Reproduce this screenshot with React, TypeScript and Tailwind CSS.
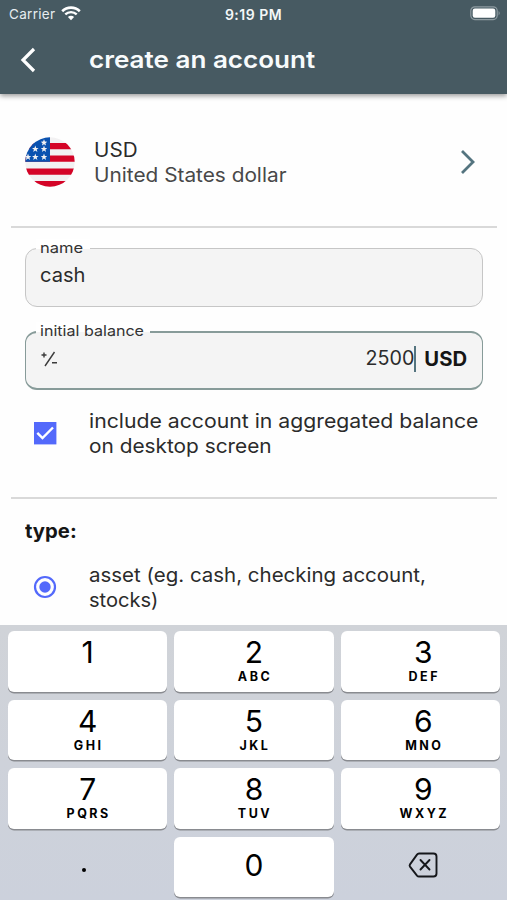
import type { ReactNode } from "react";

const KEYS: { digit: string; letters: string }[] = [
  { digit: "1", letters: "" },
  { digit: "2", letters: "ABC" },
  { digit: "3", letters: "DEF" },
  { digit: "4", letters: "GHI" },
  { digit: "5", letters: "JKL" },
  { digit: "6", letters: "MNO" },
  { digit: "7", letters: "PQRS" },
  { digit: "8", letters: "TUV" },
  { digit: "9", letters: "WXYZ" },
];

function StatusBar() {
  return (
    <div className="flex h-7 items-center text-[13.5px] text-[#e6edf0]">
      <div className="flex flex-1 items-center gap-[6px] pl-[9px]">
        <span className="tracking-[0.3px]">Carrier</span>
        <svg width="20" height="15" viewBox="0 0 20 15" className="mb-[2px] shrink-0">
          <path d="M1.2 5.2a12.6 12.6 0 0 1 17.6 0" fill="none" stroke="#fff" strokeWidth="2.6" />
          <path d="M4.3 8.4a8.2 8.2 0 0 1 11.4 0" fill="none" stroke="#fff" strokeWidth="2.4" />
          <path d="M10 14.2 6.9 11a4.4 4.4 0 0 1 6.2 0z" fill="#fff" />
        </svg>
      </div>
      <span className="-ml-[3px] text-[14px] font-semibold tracking-[0.5px] text-[#f4f7f8]">9:19 PM</span>
      <div className="flex flex-1 justify-end pr-[6px] pb-px">
        <svg width="31" height="15" viewBox="0 0 31 15">
          <rect x="0.8" y="0.8" width="26.4" height="12.8" rx="4" fill="none" stroke="#8e9ba1" strokeWidth="1.2" />
          <rect x="2.7" y="2.6" width="22.6" height="9.2" rx="2.2" fill="#fff" />
          <path d="M28.6 5q2.2 2.2 0 4.4z" fill="#8e9ba1" />
        </svg>
      </div>
    </div>
  );
}

function UsFlag() {
  const stars = [
    [19, 5.7], [10.3, 12], [19, 12], [3, 20], [10.3, 20], [19, 20],
  ];
  return (
    <svg width="50" height="50" viewBox="0 0 50 50" className="shrink-0">
      <defs>
        <clipPath id="disc"><circle cx="25" cy="25" r="24.7" /></clipPath>
        <path id="star" d="M0-3.4.9-1.1 3.3-1 1.4.5 2.1 2.9 0 1.5-2.1 2.9-1.4.5-3.3-1-.9-1.1z" />
      </defs>
      <g clipPath="url(#disc)">
        <rect width="50" height="50" fill="#f2f1f2" />
        <path d="M0 6h50v6.2H0zM0 18.6h50v6.2H0zM0 31.5h50v6.2H0zM0 44h50v6H0z" fill="#d40427" />
        <rect width="25" height="24.8" fill="#0a52b0" />
        {stars.map(([x, y]) => (
          <use key={`${x}-${y}`} href="#star" x={x} y={y} fill="#f2f1f2" />
        ))}
      </g>
    </svg>
  );
}

function Field({ label, labelClass, scaleClass, borderClass, children }: {
  label: string;
  labelClass: string;
  scaleClass: string;
  borderClass: string;
  children: ReactNode;
}) {
  return (
    <div className={`relative flex h-[59px] items-center rounded-xl bg-[#f4f4f4] px-[14px] ${borderClass}`}>
      <span className={`absolute left-[10px] h-[13px] bg-linear-to-b from-white from-75% to-[#f4f4f4] to-75% pl-1 text-[14.5px] leading-[18px] whitespace-nowrap text-[#333] ${labelClass}`}>
        <span className={`inline-block origin-left ${scaleClass}`}>{label}</span>
      </span>
      {children}
    </div>
  );
}

export default function App() {
  return (
    <div className="flex h-[900px] w-full flex-col overflow-hidden bg-[#fefefe] font-['Inter','Liberation_Sans',sans-serif] text-[#2b2b2b]">
      <header className="z-10 h-[94px] shrink-0 bg-[#475a62] shadow-[0_2px_5px_rgba(0,0,0,0.4)]">
        <StatusBar />
        <div className="flex h-[64px] items-center pl-5">
          <svg width="16" height="26" viewBox="0 0 16 26">
            <path d="M14 2 3 13l11 11" fill="none" stroke="#fff" strokeWidth="3.2" />
          </svg>
          <h1 className="ml-[53px] origin-left scale-x-[1.085] text-[24px] font-semibold whitespace-nowrap text-[#f8fbfc]">create an account</h1>
        </div>
      </header>

      <main className="flex h-[531px] shrink-0 flex-col">
        <section className="flex h-[132px] shrink-0 items-center px-[25px] pb-0">
          <div className="flex w-full items-center pt-1">
            <UsFlag />
            <div className="ml-[19px] flex-1 pt-px text-[19.5px] leading-[24.5px] whitespace-nowrap">
              <div className="origin-left scale-x-[1.06]">USD</div>
              <div className="origin-left scale-x-[1.067] text-[#484848]">United States dollar</div>
            </div>
            <svg width="16" height="26" viewBox="0 0 16 26" className="mr-[6px]">
              <path d="M2 2l11 11L2 24" fill="none" stroke="#54747f" strokeWidth="2.8" />
            </svg>
          </div>
        </section>
        <div className="mr-[10px] ml-[11px] h-[2px] shrink-0 bg-[#d9d9d9]" />

        <section className="flex h-[269px] shrink-0 flex-col pt-5 pr-[24px] pl-[25px]">
          <Field label="name" labelClass="-top-[10px] w-[54px]" scaleClass="scale-x-[1.14]" borderClass="border border-[#c6c6c6]">
            <span className="origin-left scale-x-[1.03] pb-1 text-[19.5px]">cash</span>
          </Field>
          <div className="h-6 shrink-0" />
          <Field label="initial balance" labelClass="-top-[11px] w-[114px]" scaleClass="scale-x-[1.11]" borderClass="border-x border-y-2 border-[#879b99]">
            <svg width="18" height="16" viewBox="0 0 18 16" className="mb-1" fill="none" stroke="#3b3b3b" strokeWidth="1.4">
              <path d="M1.5 4h5M4 1.5v5M5 15 14.5 1M12 11.7h5" />
            </svg>
            <span className="ml-auto origin-right scale-x-[1.01] pb-1 text-[19.5px]">2500</span>
            <span className="mb-1 h-[26px] w-[2px] bg-[#54747f]" />
            <span className="mr-px ml-[10px] origin-right scale-x-[1.04] pb-[2px] text-[19.5px] font-bold text-[#151515]">USD</span>
          </Field>
          <div className="mt-[18px] flex items-center pl-2">
            <svg width="24" height="24" viewBox="0 0 24 24" className="shrink-0">
              <rect x="1" y="1" width="22.4" height="22.4" fill="#5369fb" />
              <path d="m4.3 11.8 5.2 5.2L20 6.5" fill="none" stroke="#fff" strokeWidth="2.4" />
            </svg>
            <div className="ml-8 pt-px text-[19.5px] leading-[24.5px] whitespace-nowrap">
              <div className="w-fit origin-left scale-x-[1.088]">include account in aggregated balance</div>
              <div className="w-fit origin-left scale-x-[1.068]">on desktop screen</div>
            </div>
          </div>
        </section>
        <div className="mr-[10px] ml-[11px] h-[2px] shrink-0 bg-[#d9d9d9]" />

        <section className="flex flex-col px-[25px] pt-5">
          <h2 className="origin-left scale-x-[1.04] text-[19.5px] leading-[25px] font-bold text-[#151515]">type:</h2>
          <div className="mt-[18px] flex items-center pl-2">
            <svg width="24" height="24" viewBox="0 0 24 24" className="shrink-0">
              <circle cx="12" cy="12" r="10" fill="none" stroke="#5369fb" strokeWidth="2.2" />
              <circle cx="12" cy="12" r="5.7" fill="#5369fb" />
            </svg>
            <div className="ml-8 pt-px text-[19.5px] leading-[24.5px] whitespace-nowrap">
              <div className="w-fit origin-left scale-x-[1.05]">asset (eg. cash, checking account,</div>
              <div className="w-fit origin-left scale-x-[1.03]">stocks)</div>
            </div>
          </div>
        </section>
      </main>

      <div className="grid h-[275px] shrink-0 grid-cols-3 content-start gap-x-[7px] gap-y-2 bg-linear-to-b from-[#d0d3d8] to-[#ccd1dc] pt-[6px] pr-[7px] pl-2 text-black">
        {KEYS.map(({ digit, letters }, i) => (
          <div key={digit} className={`flex h-[60.5px] flex-col items-center rounded-[6px] bg-white pt-1 shadow-[0_1.5px_0_#898b90] ${i % 3 === 2 ? "pl-[6px]" : ""}`}>
            <span className="text-[30px] leading-[34px]">{digit}</span>
            <span className="pl-[2px] text-[12.5px] leading-[15px] font-bold tracking-[2.5px]">{letters}</span>
          </div>
        ))}
        <div className="flex h-[60px] items-center justify-center pt-[7px] pr-[8px]">
          <span className="h-1 w-1 rounded-full bg-black" />
        </div>
        <div className="flex h-[60px] items-center justify-center rounded-[6px] bg-white pb-[2px] text-[30px] shadow-[0_1.5px_0_#898b90]">0</div>
        <div className="flex h-[60px] items-center justify-center pb-[3px] pl-[6px]">
          <svg width="30" height="26" viewBox="0 0 30 26" fill="none" stroke="#15171b" strokeWidth="1.9" strokeLinejoin="round" strokeLinecap="round">
            <path d="M11 1.5h14.5a3 3 0 0 1 3 3v17a3 3 0 0 1-3 3H11q-1.2 0-2-.9l-7-9q-.8-1.1 0-2.2l7-9.8q.8-1.1 2-1.1zM12.5 8l9 9.5M21.5 8l-9 9.5" />
          </svg>
        </div>
      </div>
    </div>
  );
}
